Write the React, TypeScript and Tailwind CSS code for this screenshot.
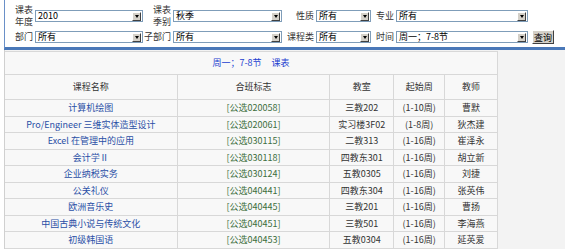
const font = { fontFamily: '"Noto Sans CJK SC", "Liberation Sans", sans-serif' }

function Select({ value, w }: { value: string; w: string }) {
  return (
    <div className={`${w} flex h-[12px] items-center border border-[#7f9db9] bg-white`}>
      <span className="flex-1 whitespace-nowrap pl-[2px] text-[9px] leading-[10px] text-black">{value}</span>
      <span className="mr-[1px] flex h-[9px] w-[9px] items-center justify-center border border-t-white border-l-white border-r-[#404040] border-b-[#404040] bg-[#d4d0c8]">
        <span className="h-0 w-0 border-x-[2.5px] border-t-[3px] border-x-transparent border-t-black" />
      </span>
    </div>
  )
}

function Label({ text, w, two }: { text: string; w: string; two?: boolean }) {
  return (
    <div className={`${w} pr-[2px] text-right text-[9px] text-[#333] ${two ? 'leading-[12px]' : 'leading-[10px]'}`}>
      {two ? (
        <>
          <div>{text.slice(0, 2)}</div>
          <div>{text.slice(2)}</div>
        </>
      ) : (
        text
      )}
    </div>
  )
}

const rows = [
  ['计算机绘图', '[公选020058]', '三教202', '(1-10周)', '曹默'],
  ['Pro/Engineer 三维实体造型设计', '[公选020061]', '实习楼3F02', '(1-8周)', '狄杰建'],
  ['Excel 在管理中的应用', '[公选030115]', '二教313', '(1-16周)', '崔泽永'],
  ['会计学Ⅱ', '[公选030118]', '四教东301', '(1-16周)', '胡立新'],
  ['企业纳税实务', '[公选030124]', '五教0305', '(1-16周)', '刘捷'],
  ['公关礼仪', '[公选040441]', '四教东304', '(1-16周)', '张英伟'],
  ['欧洲音乐史', '[公选040445]', '三教201', '(1-16周)', '曹扬'],
  ['中国古典小说与传统文化', '[公选040451]', '三教501', '(1-16周)', '李海燕'],
  ['初级韩国语', '[公选040453]', '五教0304', '(1-16周)', '延英爱'],
]

const cols = ['w-[173px]', 'w-[153px]', 'w-[64px]', 'w-[51px]', 'w-[52px]']

export default function App() {
  return (
    <div className="h-[249px] w-[565px] overflow-hidden bg-white pl-[4px]" style={font}>
      <div className="border-b-[3px] border-l border-b-[#4a78b8] border-l-[#6a90c8] bg-white">
        <div className="flex h-[29px] items-center pt-[3px]">
          <Label text="课表年度" w="w-[30px]" two />
          <Select value="2010" w="w-[108px]" />
          <Label text="课表季别" w="w-[30px]" two />
          <Select value="秋季" w="w-[109px]" />
          <Label text="性质" w="w-[34px]" />
          <Select value="所有" w="w-[55px]" />
          <Label text="专业" w="w-[25px]" />
          <Select value="所有" w="w-[132px]" />
        </div>
        <div className="flex h-[16px] items-center">
          <Label text="部门" w="w-[30px]" />
          <Select value="所有" w="w-[108px]" />
          <Label text="子部门" w="w-[30px]" />
          <Select value="所有" w="w-[109px]" />
          <Label text="课程类" w="w-[34px]" />
          <Select value="所有" w="w-[55px]" />
          <Label text="时间" w="w-[25px]" />
          <Select value="周一；7-8节" w="w-[132px]" />
          <button className="ml-[4px] h-[14px] w-[22px] border border-t-white border-l-white border-r-[#404040] border-b-[#404040] bg-[#d4d0c8] text-[9px] leading-none text-black">
            查询
          </button>
        </div>
        <div className="h-[2px]" />
      </div>
      <div className="h-[200px] border-l border-[#d0d0d0] bg-[#f3f3f3] pt-[1px]">
        <div className="w-[493px] border-t border-r border-[#d8d8d8] bg-[#f8f8f8]">
          <div className="flex h-[23px] items-center justify-center border-b border-[#d8d8d8] text-[9px] text-[#1d3fd0]">
            周一；7-8节<span className="ml-[10px]">课表</span>
          </div>
          <div className="flex h-[25px] border-b border-[#d8d8d8] text-[9px] text-[#333]">
            {['课程名称', '合班标志', '教室', '起始周', '教师'].map((h, i) => (
              <div key={h} className={`${cols[i]} flex items-center justify-center ${i < 4 ? 'border-r border-[#d8d8d8]' : ''}`}>
                {h}
              </div>
            ))}
          </div>
          {rows.map((r) => (
            <div key={r[1]} className="flex h-[16.5px] border-b border-[#d8d8d8] text-[9px] leading-none">
              {r.map((c, i) => (
                <div
                  key={i}
                  className={`${cols[i]} flex items-center justify-center whitespace-nowrap ${i < 4 ? 'border-r border-[#d8d8d8]' : ''} ${
                    i === 0 ? 'text-[#2a4fa6]' : i === 1 ? 'text-[#3d6e3d]' : 'text-[#333]'
                  }`}
                >
                  {c}
                </div>
              ))}
            </div>
          ))}
        </div>
      </div>
    </div>
  )
}
